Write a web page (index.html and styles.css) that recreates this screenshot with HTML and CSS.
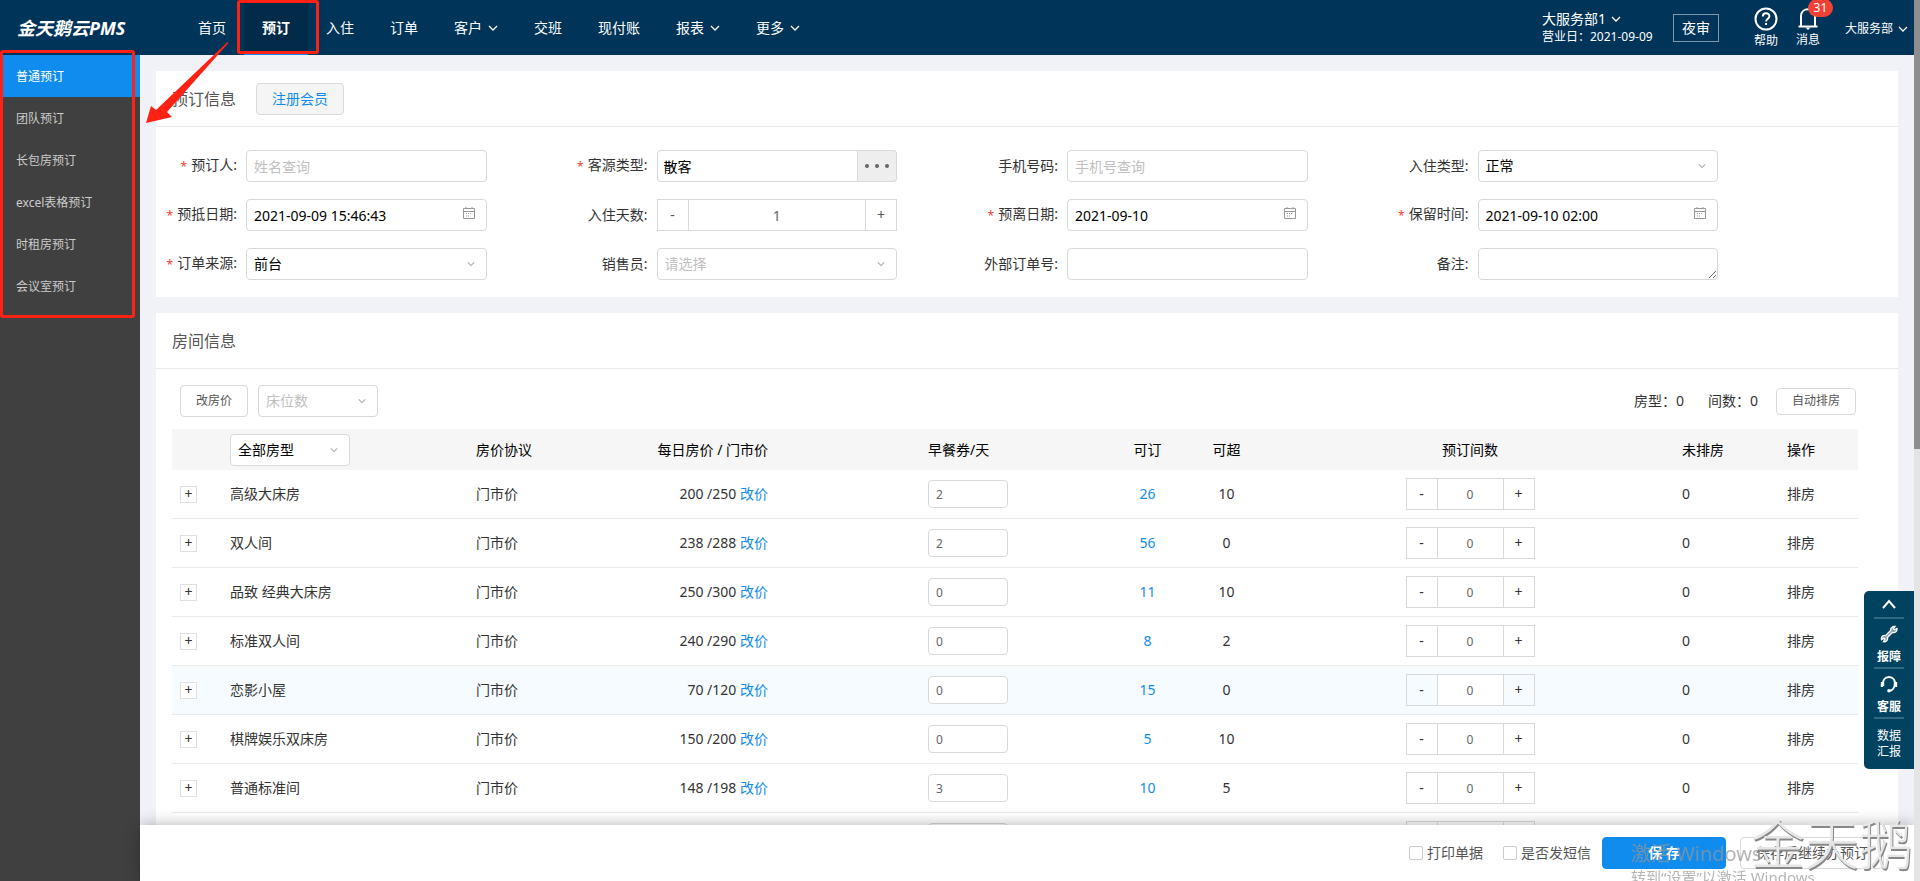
FILE: index.html
```
<!DOCTYPE html>
<html lang="zh-CN">
<head>
<meta charset="utf-8">
<title>金天鹅云PMS</title>
<link rel="stylesheet" href="styles.css">
</head>
<body>
<svg class="sprite" aria-hidden="true">
  <symbol id="chevron" viewBox="0 0 10 10"><path d="M1 3l4 4 4-4" fill="none" stroke="currentColor" stroke-width="1.3"/></symbol>
  <symbol id="calendar" viewBox="0 0 12 12"><path d="M.5 1.5h11v10H.5zM.5 4.5h11M3 0v2M9 0v2" fill="none" stroke="currentColor"/><path d="M3 6.5h6M3 9h4" fill="none" stroke="currentColor" stroke-dasharray="1 1"/></symbol>
</svg>
<div class="app">
  <header class="topbar">
    <div class="logo">金天鹅云PMS</div>
    <nav class="nav">
      <a href="#">首页</a>
      <a href="#" class="active">预订</a>
      <a href="#">入住</a>
      <a href="#">订单</a>
      <a href="#">客户<svg class="chev"><use href="#chevron"/></svg></a>
      <a href="#">交班</a>
      <a href="#">现付账</a>
      <a href="#">报表<svg class="chev"><use href="#chevron"/></svg></a>
      <a href="#">更多<svg class="chev"><use href="#chevron"/></svg></a>
    </nav>
    <div class="branch">
      <div class="branch-name">大服务部1<svg class="chev"><use href="#chevron"/></svg></div>
      <div class="branch-date">营业日：2021-09-09</div>
    </div>
    <button class="audit">夜审</button>
    <a href="#" class="tool">
      <svg viewBox="0 0 24 24"><circle cx="12" cy="12" r="10.5" fill="none" stroke="currentColor" stroke-width="2"/><path d="M8.8 9.6c0-4.4 6.6-4.2 6.6-.4 0 2.6-3.3 2.4-3.3 5.4M12.1 16v2" fill="none" stroke="currentColor" stroke-width="2"/></svg>
      帮助
    </a>
    <a href="#" class="tool">
      <svg viewBox="0 0 24 24"><path d="M5 20V10c0-9 14-9 14 0v10M2.500 20.500h19" fill="none" stroke="currentColor" stroke-width="2"/><path d="M9.500 21.500h5L12 24z" fill="currentColor"/></svg>
      消息<span class="badge">31</span>
    </a>
    <a href="#" class="account">大服务部<svg class="chev"><use href="#chevron"/></svg></a>
  </header>

  <div class="body">
    <aside class="sidebar">
      <a href="#" class="active">普通预订</a>
      <a href="#">团队预订</a>
      <a href="#">长包房预订</a>
      <a href="#">excel表格预订</a>
      <a href="#">时租房预订</a>
      <a href="#">会议室预订</a>
    </aside>

    <div class="content">
      <main class="scroll">
        <section class="card">
          <div class="card-head"><h2>预订信息</h2><button class="member">注册会员</button></div>
          <form class="form">
            <div class="field"><label class="req" for="guest">预订人:</label><div class="ctl"><input id="guest" placeholder="姓名查询"></div></div>
            <div class="field"><label class="req" for="source">客源类型:</label><div class="ctl group"><input id="source" value="散客"><button type="button" class="more" aria-label="选择客源"><i></i><i></i><i></i></button></div></div>
            <div class="field"><label for="phone">手机号码:</label><div class="ctl"><input id="phone" placeholder="手机号查询"></div></div>
            <div class="field"><label for="kind">入住类型:</label><div class="ctl"><select id="kind"><option>正常</option></select><svg class="caret"><use href="#chevron"/></svg></div></div>

            <div class="field"><label class="req" for="arrive">预抵日期:</label><div class="ctl"><input id="arrive" value="2021-09-09 15:46:43"><svg class="cal"><use href="#calendar"/></svg></div></div>
            <div class="field"><label for="days">入住天数:</label><div class="ctl stepper"><button type="button">-</button><input id="days" value="1"><button type="button">+</button></div></div>
            <div class="field"><label class="req" for="leave">预离日期:</label><div class="ctl"><input id="leave" value="2021-09-10"><svg class="cal"><use href="#calendar"/></svg></div></div>
            <div class="field"><label class="req" for="keep">保留时间:</label><div class="ctl"><input id="keep" value="2021-09-10 02:00"><svg class="cal"><use href="#calendar"/></svg></div></div>

            <div class="field"><label class="req" for="origin">订单来源:</label><div class="ctl"><select id="origin"><option>前台</option></select><svg class="caret"><use href="#chevron"/></svg></div></div>
            <div class="field"><label for="sales">销售员:</label><div class="ctl"><select id="sales" class="empty"><option>请选择</option></select><svg class="caret"><use href="#chevron"/></svg></div></div>
            <div class="field"><label for="outer">外部订单号:</label><div class="ctl"><input id="outer"></div></div>
            <div class="field"><label for="note">备注:</label><div class="ctl"><textarea id="note"></textarea></div></div>
          </form>
        </section>

        <section class="card">
          <div class="card-head"><h2>房间信息</h2></div>
          <div class="rooms">
            <div class="toolbar">
              <button class="btn reprice">改房价</button>
              <div class="ctl narrow"><select class="empty" aria-label="床位数"><option>床位数</option></select><svg class="caret"><use href="#chevron"/></svg></div>
              <div class="totals"><span>房型：<b>0</b></span><span>间数：<b>0</b></span><button class="btn auto">自动排房</button></div>
            </div>
            <table class="table">
              <colgroup><col class="w-exp"><col class="w-name"><col class="w-deal"><col class="w-price"><col class="w-meal"><col class="w-num"><col class="w-num"><col><col class="w-left"><col class="w-num"></colgroup>
              <thead>
                <tr><th></th><th><div class="ctl narrow"><select aria-label="房型"><option>全部房型</option></select><svg class="caret"><use href="#chevron"/></svg></div></th><th>房价协议</th><th class="right">每日房价 / 门市价</th><th class="meal">早餐券/天</th><th class="mid">可订</th><th class="mid">可超</th><th class="mid">预订间数</th><th>未排房</th><th>操作</th></tr>
              </thead>
              <tbody>
                <tr><td><button class="plus">+</button></td><td>高级大床房</td><td>门市价</td><td class="right">200 /250 <a href="#">改价</a></td><td class="meal"><input aria-label="早餐券" value="2"></td><td class="mid"><a href="#">26</a></td><td class="mid">10</td><td><div class="stepper small"><button>-</button><input aria-label="间数" value="0"><button>+</button></div></td><td>0</td><td>排房</td></tr>
                <tr><td><button class="plus">+</button></td><td>双人间</td><td>门市价</td><td class="right">238 /288 <a href="#">改价</a></td><td class="meal"><input aria-label="早餐券" value="2"></td><td class="mid"><a href="#">56</a></td><td class="mid">0</td><td><div class="stepper small"><button>-</button><input aria-label="间数" value="0"><button>+</button></div></td><td>0</td><td>排房</td></tr>
                <tr><td><button class="plus">+</button></td><td>品致 经典大床房</td><td>门市价</td><td class="right">250 /300 <a href="#">改价</a></td><td class="meal"><input aria-label="早餐券" value="0"></td><td class="mid"><a href="#">11</a></td><td class="mid">10</td><td><div class="stepper small"><button>-</button><input aria-label="间数" value="0"><button>+</button></div></td><td>0</td><td>排房</td></tr>
                <tr><td><button class="plus">+</button></td><td>标准双人间</td><td>门市价</td><td class="right">240 /290 <a href="#">改价</a></td><td class="meal"><input aria-label="早餐券" value="0"></td><td class="mid"><a href="#">8</a></td><td class="mid">2</td><td><div class="stepper small"><button>-</button><input aria-label="间数" value="0"><button>+</button></div></td><td>0</td><td>排房</td></tr>
                <tr class="hover"><td><button class="plus">+</button></td><td>恋影小屋</td><td>门市价</td><td class="right">70 /120 <a href="#">改价</a></td><td class="meal"><input aria-label="早餐券" value="0"></td><td class="mid"><a href="#">15</a></td><td class="mid">0</td><td><div class="stepper small"><button>-</button><input aria-label="间数" value="0"><button>+</button></div></td><td>0</td><td>排房</td></tr>
                <tr><td><button class="plus">+</button></td><td>棋牌娱乐双床房</td><td>门市价</td><td class="right">150 /200 <a href="#">改价</a></td><td class="meal"><input aria-label="早餐券" value="0"></td><td class="mid"><a href="#">5</a></td><td class="mid">10</td><td><div class="stepper small"><button>-</button><input aria-label="间数" value="0"><button>+</button></div></td><td>0</td><td>排房</td></tr>
                <tr><td><button class="plus">+</button></td><td>普通标准间</td><td>门市价</td><td class="right">148 /198 <a href="#">改价</a></td><td class="meal"><input aria-label="早餐券" value="3"></td><td class="mid"><a href="#">10</a></td><td class="mid">5</td><td><div class="stepper small"><button>-</button><input aria-label="间数" value="0"><button>+</button></div></td><td>0</td><td>排房</td></tr>
                <tr><td></td><td></td><td></td><td></td><td class="meal"><input aria-label="早餐券"></td><td></td><td></td><td><div class="stepper small"><button></button><input aria-label="间数"><button></button></div></td><td></td><td></td></tr>
              </tbody>
            </table>
          </div>
        </section>
      </main>

      <footer class="actions">
        <label class="check"><input type="checkbox">打印单据</label>
        <label class="check"><input type="checkbox">是否发短信</label>
        <button class="btn save">保 存</button>
        <button class="btn again">保存后继续办预订</button>
      </footer>
    </div>
  </div>
</div>

<aside class="dock">
  <a href="#" aria-label="回到顶部"><svg class="up" viewBox="0 0 14 10"><path d="M1 9l6-7 6 7" fill="none" stroke="currentColor" stroke-width="2"/></svg></a>
  <a href="#"><svg class="glyph" viewBox="0 0 18 18"><path d="M12 2.500a3.500 3.500 0 0 1 3-1.200l-1.600 2.500 1 1 2.500-1.400c.7 3-2 4.800-4.300 3.900l-5.200 5.200c.8 2.600-1.400 4.700-4 4.200l1.500-2.500-1-1-2.400 1.500c-.6-2.900 1.500-4.800 4-4.100l5.300-5.300c-.4-1.200 0-2.100 1.200-2.800z" fill="#7fa0b0" stroke="currentColor" stroke-width="1.300"/></svg>报障</a>
  <a href="#"><svg class="glyph" viewBox="0 0 18 18"><path d="M3.500 11c-3.500-12 14.500-12 11 0-.8 3-2.500 4.500-5 4.800" fill="none" stroke="currentColor" stroke-width="1.800"/><path d="M2 7v5M16 7v5" stroke="currentColor" stroke-width="2.400"/><circle cx="9" cy="15.700" r="1.800" fill="currentColor"/></svg>客服</a>
  <a href="#" class="report">数据<br>汇报</a>
</aside>

<div class="scrollbar"><div class="thumb"></div></div>

<div class="activate"><p class="big">激活 Windows</p><p>转到“设置”以激活 Windows</p></div>
<div class="brandmark">金天鹅</div>

<div class="mark mark-nav"></div>
<div class="mark mark-side"></div>
<svg class="arrow" viewBox="0 0 84 84"><path d="M82.500 0L83 1 21 69 17 73 27 76 1 81 6 64 10 68z" fill="none"/><path d="M82.500 0L83.500 1 22 70 27 75 1 81 6 64 11 68z" fill="#ff2113"/></svg>
</body>
</html>
```

FILE: styles.css
```
* { box-sizing: border-box; }
body, h2, p { margin: 0; }
body {
  font: 14px/20px "Noto Sans", "Noto Sans CJK SC", sans-serif;
  color: #333;
  overflow: hidden;
}
button, input, select, textarea { font: inherit; color: inherit; margin: 0; padding: 0; }
button { cursor: pointer; }
a { color: #108cee; text-decoration: none; }
.sprite { position: absolute; width: 0; height: 0; }

.app { height: 100vh; padding-right: 6px; display: flex; flex-direction: column; }

/* top bar */
.topbar { flex: none; height: 55px; background: #003459; color: #fff; display: flex; align-items: center; padding-right: 6px; }
.topbar a { color: #fff; }
.logo { width: 180px; padding-left: 17px; font-size: 18px; font-weight: bold; font-style: italic; white-space: nowrap; }
.nav { display: flex; height: 100%; margin-right: auto; }
.nav a { display: flex; align-items: center; padding: 0 18px; white-space: nowrap; }
.nav .active { background: #022b49; font-weight: bold; border-bottom: 2px solid #108cee; padding-top: 2px; }
.chev { width: 10px; height: 10px; margin-left: 5px; }
.nav .chev { margin-left: 6px; }
.branch { width: 131px; white-space: nowrap; }
.branch-name { display: flex; align-items: center; line-height: 18px; }
.branch-date { font-size: 12px; line-height: 18px; }
.audit { width: 46px; height: 28px; background: none; border: 1px solid #7b96ab; color: #fff; margin-right: 26px; }
.tool { position: relative; width: 42px; font-size: 12px; line-height: 18px; display: flex; flex-direction: column; align-items: center; gap: 1px; padding-top: 1px; }
.tool svg { width: 24px; height: 24px; }
.badge { position: absolute; top: -6px; left: 21px; width: 25px; height: 18px; border-radius: 9px; background: #f04134; text-align: center; line-height: 18px; }
.account { font-size: 12px; margin-left: 16px; padding-top: 2px; display: flex; align-items: center; white-space: nowrap; }

/* frame */
.body { flex: 1; min-height: 0; display: flex; }
.sidebar { flex: none; width: 140px; background: #404040; }
.sidebar a { display: block; height: 42px; line-height: 44px; padding-left: 16px; font-size: 12px; color: #ccc; }
.sidebar .active { background: #108cee; color: #fff; }
.content { flex: 1; min-width: 0; display: flex; flex-direction: column; }
.scroll { flex: 1; min-height: 0; overflow: hidden; background: #f0f2f7; padding: 16px 16px 0; }
.card { background: #fff; margin-bottom: 16px; }
.card-head { height: 56px; border-bottom: 1px solid #e9e9e9; padding: 0 16px; display: flex; align-items: center; gap: 20px; }
.card-head h2 { font-size: 16px; font-weight: normal; color: #555; }
.member { width: 88px; height: 32px; border: 1px solid #d9d9d9; border-radius: 4px; background: #f5f5f5; color: #108cee; }

/* form */
.form { display: grid; grid-template-columns: repeat(4, 1fr); row-gap: 17px; padding: 23px 100px 17px 0; }
.field { display: flex; align-items: center; padding-right: 80px; }
.field label { flex: none; width: 90px; padding-right: 9px; white-space: nowrap; display: flex; justify-content: flex-end; }
.req::before { content: "*"; color: #f04134; font-size: 12px; margin-right: 4px; padding-top: 2px; }
.ctl { position: relative; flex: 1; min-width: 0; height: 32px; display: flex; color: #000; }
.ctl > input, .ctl > select, .ctl > textarea { width: 100%; height: 32px; border: 1px solid #d9d9d9; border-radius: 4px; background: #fff; padding: 0 7px; appearance: none; outline: 0; }
::placeholder { color: #bfbfbf; opacity: 1; }
.ctl > .empty { color: #bfbfbf; }
.caret { position: absolute; right: 12px; top: 12px; width: 8px; height: 8px; color: #aaa; pointer-events: none; }
.cal { position: absolute; right: 12px; top: 8px; width: 12px; height: 12px; color: #999; }
.group > input { border-radius: 4px 0 0 4px; padding: 0 6px; }
.more { flex: none; width: 39px; border: 1px solid #d9d9d9; border-left: 0; border-radius: 0 4px 4px 0; background: #eee; display: flex; align-items: center; justify-content: center; gap: 6px; }
.more i { width: 4px; height: 4px; border-radius: 2px; background: #666; }
.narrow { flex: none; width: 120px; }
.stepper { display: flex; height: 32px; border: 1px solid #d9d9d9; color: #555; }
.stepper button { flex: none; width: 30px; border: 0; background: none; }
.stepper > input { flex: 1; min-width: 0; height: 100%; border: solid #d9d9d9; border-width: 0 1px; border-radius: 0; background: #fff; text-align: center; color: #666; font-size: 12px; }
.ctl.stepper > input { font-size: 14px; }

/* rooms */
.rooms { padding: 16px 40px 16px 16px; }
.toolbar { display: flex; align-items: center; padding-left: 8px; margin-bottom: 12px; gap: 10px; }
.btn { border: 1px solid #d9d9d9; border-radius: 4px; background: #fff; color: #555; font-size: 12px; }
.reprice { width: 68px; height: 32px; }
.totals { margin-left: auto; padding-right: 2px; display: flex; align-items: center; white-space: nowrap; }
.totals b { font-weight: normal; }
.totals span { margin-right: 24px; }
.totals span + span { margin-right: 18px; }
.auto { width: 80px; height: 27px; }
.table { width: 100%; table-layout: fixed; border-collapse: separate; border-spacing: 0; }
.w-exp { width: 50px; }
.w-name { width: 246px; }
.w-deal { width: 132px; }
.w-price { width: 176px; }
.w-meal { width: 332px; }
.w-num { width: 79px; }
.w-left { width: 105px; }
.table th, .table td { padding: 0 8px; text-align: left; white-space: nowrap; }
.table th { height: 41px; background: #f6f6f6; color: #000; font-weight: normal; }
.table td { height: 49px; border-bottom: 1px solid #e9e9e9; }
.table .right { text-align: right; }
.table .mid { text-align: center; }
.table .meal { padding-left: 152px; }
.meal input { display: block; width: 80px; height: 28px; border: 1px solid #d9d9d9; border-radius: 4px; padding: 0 7px; font-size: 12px; color: #666; }
.table .small { width: 129px; margin: 0 auto; color: #333; }
.hover td { background: #f5fbff; }
.plus { display: block; width: 17px; height: 17px; border: 1px solid #e0e0e0; background: #fff; line-height: 14px; }

/* bottom bar */
.actions { position: relative; flex: none; height: 56px; background: #fff; box-shadow: 0 0 15px rgba(0, 0, 0, .3); display: flex; justify-content: flex-end; padding: 12px 30px 12px 0; color: #555; }
.check { display: flex; align-items: center; gap: 4px; height: 32px; margin-right: 20px; }
.check + .check { margin-right: 11px; }
.check input { appearance: none; width: 14px; height: 14px; border: 1px solid #ccc; border-radius: 2px; }
.actions .btn { height: 32px; font-size: 14px; }
.actions .save { width: 124px; background: #108cee; border-color: #108cee; color: #fff; font-weight: bold; margin-right: 14px; }
.again { width: 144px; }

/* floating dock */
.dock { position: fixed; right: 6px; top: 591px; width: 50px; background: #004260; border-radius: 5px 0 0 5px; padding: 0 10px 9px; }
.dock a { display: flex; flex-direction: column; align-items: center; color: #fff; font-size: 12px; line-height: 16px; font-weight: bold; height: 50px; border-bottom: 2px solid #336881; padding-top: 6px; gap: 6px; }
.dock a:first-child { height: 28px; padding-top: 8px; }
.dock .report { display: block; border: 0; text-align: center; padding-top: 9px; height: 41px; font-weight: normal; }
.up { width: 14px; height: 10px; }
.glyph { width: 18px; height: 18px; }

.scrollbar { position: fixed; top: 0; right: 0; bottom: 0; width: 6px; background: #e4e4e4; }
.thumb { height: 51%; background: #8e8e8e; }

/* overlays */
.activate { position: fixed; left: 1631px; top: 841px; color: rgba(150, 150, 150, .7); font-size: 15px; line-height: 20px; white-space: nowrap; pointer-events: none; }
.activate .big { font-size: 20px; line-height: 26px; }
.brandmark { position: fixed; right: 7px; top: 814px; font-size: 54px; font-weight: 300; line-height: 60px; color: #e6e6e6; text-shadow: 1px 2px 0 #888; pointer-events: none; }
.mark { position: fixed; border: 3px solid #ff2113; border-radius: 3px; pointer-events: none; }
.mark-nav { left: 237px; top: 0; width: 82px; height: 54px; }
.mark-side { left: 0; top: 50px; width: 135px; height: 268px; }
.arrow { position: fixed; left: 145px; top: 42px; width: 84px; height: 84px; pointer-events: none; }
```
